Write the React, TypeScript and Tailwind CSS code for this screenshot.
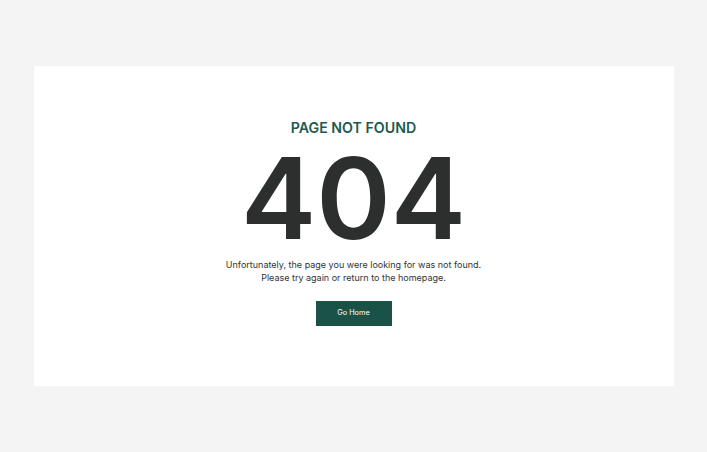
import React from "react";

export default function App() {
  return (
    <div
      className="w-full h-[452px] bg-[#f4f4f4] flex items-center justify-center"
      style={{ fontFamily: "Inter, 'Noto Sans', sans-serif" }}
    >
      <div className="w-[640px] h-[320px] bg-white flex flex-col items-center pt-[53px]">
        <h2 className="text-[14.2px] leading-[18px] font-semibold text-[#1d5a4e]">
          PAGE NOT FOUND
        </h2>
        <div className="text-[113px] leading-[113px] font-semibold text-[#2d2f2e] mt-[5px]">
          404
        </div>
        <p className="text-[9px] leading-[13px] text-[#333333] text-center mt-[3px]">
          Unfortunately, the page you were looking for was not found.
          <br />
          Please try again or return to the homepage.
        </p>
        <button className="mt-[17px] w-[76px] h-[25px] bg-[#1b5248] text-white text-[7.3px] flex items-center justify-center">
          Go Home
        </button>
      </div>
    </div>
  );
}
